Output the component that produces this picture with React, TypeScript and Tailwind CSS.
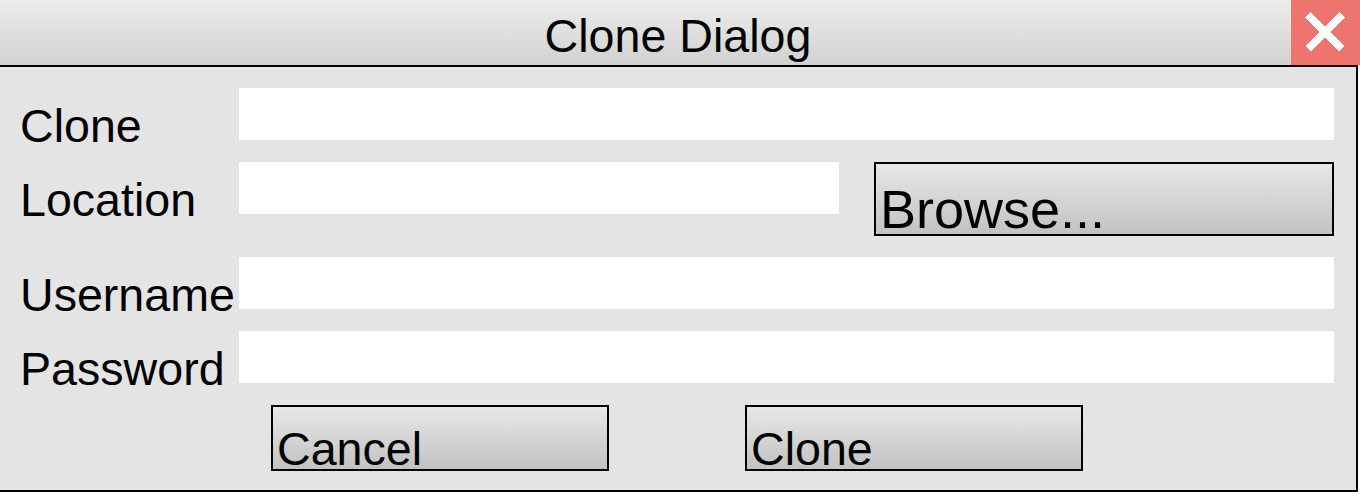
export default function App() {
  const field = 'h-[52px] bg-white'
  const label = "w-[219px] shrink-0 h-[52px] pt-[15px] leading-[46px] whitespace-nowrap"
  const btn =
    'h-[66px] w-[338px] border-2 border-black bg-gradient-to-b from-[#e8e8e8] to-[#c2c2c2] text-left pl-[4px] pt-[19px] leading-[46px]'

  return (
    <div className="w-[1360px] h-[496px] bg-white text-black text-[46.6px] font-['Liberation_Sans',Arial,sans-serif]">
      {/* Title bar */}
      <div className="flex h-[65px]">
        <div className="flex-1 pl-[65px] pt-[8px] text-center leading-[57px] bg-gradient-to-b from-[#ededed] to-[#d1d1d1]">
          Clone Dialog
        </div>
        <button className="w-[69px] h-[65px] bg-[#ee7470] flex items-start pl-[14px] pt-[12px]">
          <svg width="40" height="40" viewBox="0 0 40 40" shapeRendering="crispEdges">
            <line x1="3" y1="3" x2="37" y2="37" stroke="white" strokeWidth="8" />
            <line x1="37" y1="3" x2="3" y2="37" stroke="white" strokeWidth="8" />
          </svg>
        </button>
      </div>

      {/* Body */}
      <div className="w-[1358px] h-[427px] border-t-2 border-r-2 border-b-2 border-black bg-[#e4e4e4] pl-[20px] pr-[22px] pt-[21px]">
        <div className="flex items-start">
          <div className={label}>Clone</div>
          <div className={`flex-1 ${field}`} />
        </div>

        <div className="flex items-start mt-[22px]">
          <div className={label}>Location</div>
          <div className={`w-[600px] ${field}`} />
          <button className="ml-[35px] flex-1 h-[74px] border-2 border-black bg-gradient-to-b from-[#e8e8e8] to-[#c2c2c2] text-left pl-[4px] pt-[18px] text-[54px] leading-[54px]">
            Browse...
          </button>
        </div>

        <div className="flex items-start mt-[21px]">
          <div className={label}>Username</div>
          <div className={`flex-1 ${field}`} />
        </div>

        <div className="flex items-start mt-[22px]">
          <div className={label}>Password</div>
          <div className={`flex-1 ${field}`} />
        </div>

        <div className="flex mt-[22px] pl-[251px] gap-[136px]">
          <button className={btn}>Cancel</button>
          <button className={btn}>Clone</button>
        </div>
      </div>
    </div>
  )
}
